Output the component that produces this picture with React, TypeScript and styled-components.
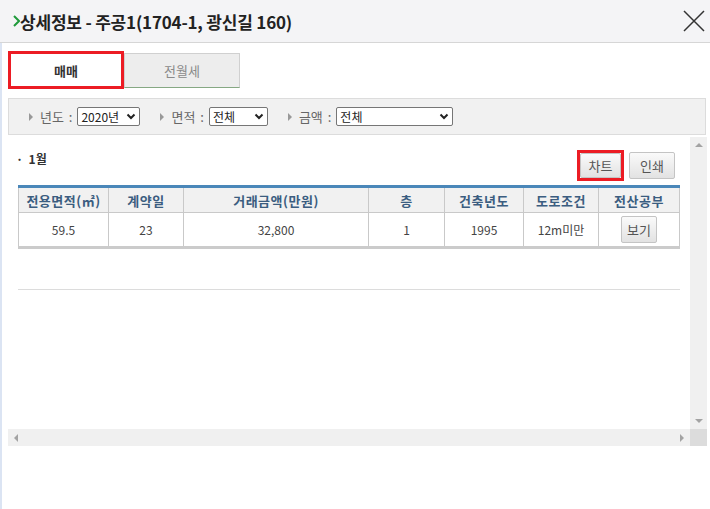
import React from 'react'
import styled, { createGlobalStyle } from 'styled-components'

const GlobalStyle = createGlobalStyle`
  html, body { margin: 0; padding: 0; background: #fff; }
  body { font-family: "Noto Sans CJK KR", "Noto Sans", "Liberation Sans", sans-serif; }
`

const Window = styled.div`
  width: 710px;
  height: 509px;
  display: flex;
  flex-direction: column;
  background: #fff;
  overflow: hidden;
`

const Header = styled.div`
  height: 42px;
  flex: none;
  display: flex;
  align-items: center;
  justify-content: space-between;
  padding: 0 4px 0 13px;
  background: #f4f4f6;
  border-bottom: 1px solid #d6d6d6;
`

const Title = styled.h1`
  margin: 0;
  display: flex;
  align-items: center;
  gap: 0;
  font-size: 17px;
  font-weight: 700;
  color: #222;
  letter-spacing: -0.2px;
`

const Body = styled.div`
  flex: 1;
  display: flex;
  flex-direction: column;
  border-left: 2px solid #dbe4f3;
  padding: 8px 4px 0 6px;
`

const Tabs = styled.div`
  display: flex;
  align-items: center;
  height: 38px;
`

const Tab = styled.div<{ $active?: boolean }>`
  box-sizing: border-box;
  width: 116px;
  display: flex;
  align-items: center;
  justify-content: center;
  font-size: 13px;
  height: ${p => (p.$active ? '38px' : '35px')};
  background: ${p => (p.$active ? '#fff' : '#ededed')};
  color: ${p => (p.$active ? '#333' : '#8a8a8a')};
  font-weight: ${p => (p.$active ? 700 : 400)};
  border: ${p => (p.$active ? '3px solid #ec1c24' : '1px solid #d0d0d0')};
  border-bottom: ${p => (p.$active ? '3px solid #ec1c24' : '1px solid #86a883')};
`

const FilterBar = styled.div`
  box-sizing: border-box;
  margin-top: 9px;
  height: 37px;
  display: flex;
  align-items: center;
  gap: 20px;
  padding-left: 20px;
  background: #f1f1f1;
  border: 1px solid #dcdcdc;
`

const FilterItem = styled.div`
  display: flex;
  align-items: center;
  font-size: 13px;
  color: #666;
`

const Arrow = styled.span`
  width: 0;
  height: 0;
  border-top: 4px solid transparent;
  border-bottom: 4px solid transparent;
  border-left: 4px solid #999;
  margin-right: 7px;
`

const Label = styled.span`
  margin-right: 5px;
  word-spacing: 2px;
`

const Select = styled.div<{ $w: number }>`
  box-sizing: border-box;
  width: ${p => p.$w}px;
  height: 19px;
  display: flex;
  align-items: center;
  justify-content: space-between;
  padding: 0 3px;
  border: 1px solid #767676;
  border-radius: 2px;
  background: #fff;
  font-size: 12px;
  color: #222;
`

const ScrollFrame = styled.div`
  height: 311px;
  display: grid;
  grid-template-columns: 1fr 17px;
  grid-template-rows: 1fr 17px;
`

const Content = styled.div`
  padding: 15px 10px 0 10px;
`

const VBar = styled.div`
  background: #f0f0f0;
  margin-top: 2px;
  display: flex;
  flex-direction: column;
  justify-content: space-between;
  align-items: center;
  padding: 6px 0;
`

const HBar = styled.div`
  background: #f0f0f0;
  display: flex;
  justify-content: space-between;
  align-items: center;
  padding: 0 6px;
`

const Corner = styled.div`
  background: #dcdcdc;
`

const Tri = styled.span<{ $dir: 'up' | 'down' | 'left' | 'right' }>`
  width: 0;
  height: 0;
  ${p =>
    p.$dir === 'up'
      ? 'border-left:4px solid transparent;border-right:4px solid transparent;border-bottom:4px solid #a3a3a3;'
      : p.$dir === 'down'
      ? 'border-left:4px solid transparent;border-right:4px solid transparent;border-top:4px solid #a3a3a3;'
      : p.$dir === 'left'
      ? 'border-top:4px solid transparent;border-bottom:4px solid transparent;border-right:4px solid #a3a3a3;'
      : 'border-top:4px solid transparent;border-bottom:4px solid transparent;border-left:4px solid #a3a3a3;'}
`

const TopRow = styled.div`
  display: flex;
  align-items: flex-start;
  justify-content: space-between;
  height: 31px;
  padding-right: 5px;
  margin-bottom: 4px;
`

const Month = styled.span`
  font-size: 12px;
  font-weight: 700;
  color: #333;
  margin-left: -2px;
  line-height: 18px;
  white-space: pre;
`

const Buttons = styled.div`
  display: flex;
  align-items: center;
  gap: 5px;
  height: 31px;
`

const Highlight = styled.div`
  border: 3px solid #ec1c24;
  display: flex;
`

const Button = styled.button<{ $w: number; $h?: number }>`
  box-sizing: border-box;
  width: ${p => p.$w}px;
  height: ${p => p.$h ?? 27}px;
  padding: 0;
  font-family: inherit;
  font-size: 13px;
  color: #555;
  background: linear-gradient(#fafafa, #e2e2e2);
  border: 1px solid #c4c4c4;
  border-radius: 2px;
`

const Table = styled.table`
  width: 661px;
  border-collapse: collapse;
  table-layout: fixed;
  border-top: 3px solid #4a87b9;
  border-bottom: 3px solid #cbcbcb;
`

const Th = styled.th`
  height: 24px;
  padding: 0;
  background: #f1f1f1;
  border: 1px solid #c9c9c9;
  border-top: none;
  font-size: 13px;
  font-weight: 700;
  color: #3b5d80;
  letter-spacing: 0.5px;
`

const Td = styled.td`
  height: 33px;
  padding: 0;
  text-align: center;
  border: 1px solid #c9c9c9;
  font-size: 12px;
  color: #444;
`

const Divider = styled.div`
  margin-top: 40px;
  height: 1px;
  background: #dcdcdc;
`

const columns = [
  { name: '전용면적(㎡)', w: 90 },
  { name: '계약일', w: 75 },
  { name: '거래금액(만원)', w: 185 },
  { name: '층', w: 76 },
  { name: '건축년도', w: 79 },
  { name: '도로조건', w: 75 },
  { name: '전산공부', w: 81 },
]

const Chevron = () => (
  <svg width="10" height="7" viewBox="0 0 10 7">
    <path d="M1.5 1.5 L5 5 L8.5 1.5" fill="none" stroke="#222" strokeWidth="2" />
  </svg>
)

export default function App() {
  return (
    <>
      <GlobalStyle />
      <Window>
        <Header>
          <Title>
            <svg width="7" height="12" viewBox="0 0 7 12">
              <path d="M1 1 L6 6 L1 11" fill="none" stroke="#1f9a3b" strokeWidth="2" />
            </svg>
            상세정보 - 주공1(1704-1, 광신길 160)
          </Title>
          <svg width="24" height="24" viewBox="0 0 24 24">
            <path d="M2 2 L22 22 M22 2 L2 22" stroke="#333" strokeWidth="1.5" />
          </svg>
        </Header>
        <Body>
          <Tabs>
            <Tab $active>매매</Tab>
            <Tab>전월세</Tab>
          </Tabs>
          <FilterBar>
            <FilterItem>
              <Arrow />
              <Label>년도 :</Label>
              <Select $w={63}>2020년<Chevron /></Select>
            </FilterItem>
            <FilterItem>
              <Arrow />
              <Label>면적 :</Label>
              <Select $w={59}>전체<Chevron /></Select>
            </FilterItem>
            <FilterItem>
              <Arrow />
              <Label>금액 :</Label>
              <Select $w={117}>전체<Chevron /></Select>
            </FilterItem>
          </FilterBar>
          <ScrollFrame>
            <Content>
              <TopRow>
                <Month>{'·  1월'}</Month>
                <Buttons>
                  <Highlight>
                    <Button $w={41} $h={25}>차트</Button>
                  </Highlight>
                  <Button $w={46}>인쇄</Button>
                </Buttons>
              </TopRow>
              <Table>
                <colgroup>
                  {columns.map(c => (
                    <col key={c.name} style={{ width: c.w }} />
                  ))}
                </colgroup>
                <thead>
                  <tr>
                    {columns.map(c => (
                      <Th key={c.name}>{c.name}</Th>
                    ))}
                  </tr>
                </thead>
                <tbody>
                  <tr>
                    <Td>59.5</Td>
                    <Td>23</Td>
                    <Td>32,800</Td>
                    <Td>1</Td>
                    <Td>1995</Td>
                    <Td>12m미만</Td>
                    <Td>
                      <Button $w={36}>보기</Button>
                    </Td>
                  </tr>
                </tbody>
              </Table>
              <Divider />
            </Content>
            <VBar>
              <Tri $dir="up" />
              <Tri $dir="down" />
            </VBar>
            <HBar>
              <Tri $dir="left" />
              <Tri $dir="right" />
            </HBar>
            <Corner />
          </ScrollFrame>
        </Body>
      </Window>
    </>
  )
}
